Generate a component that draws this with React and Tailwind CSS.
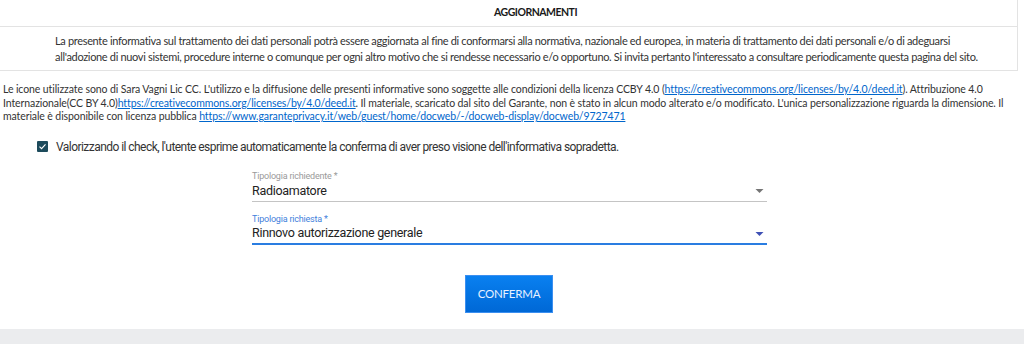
import React from "react";

const titi = { fontFamily: "Lato, 'Liberation Sans', sans-serif" };

function Select({ label, value, active }) {
  return (
    <div className="w-[515px] mr-[5px]">
      <div className={`text-[9px] leading-[11px] tracking-[-0.2px] ${active ? "text-[#3f7fdc]" : "text-[#9a9a9a]"}`}>{label}</div>
      <div
        className={`flex items-center justify-between h-[20px] text-[12.5px] tracking-[-0.3px] text-[#222] ${
          active ? "border-b-2 border-[#2a7de1]" : "border-b border-[#c4c4c4]"
        }`}
      >
        <span>{value}</span>
        <svg width="9" height="4" viewBox="0 0 10 5" className="mr-[3px]">
          <path d="M0 0 L10 0 L5 5 Z" fill={active ? "#3f51b5" : "#757575"} />
        </svg>
      </div>
    </div>
  );
}

export default function App() {
  return (
    <div className="w-[1024px] h-[344px] bg-white flex flex-col text-[#333]" style={titi}>
      <div className="w-[1018px] border-r border-[#e3e3e3]">
        <div className="h-[27px] pl-[54px] flex items-center justify-center border-b border-[#e3e3e3] text-[10.5px] tracking-[-0.5px] font-bold text-[#1a1a1a]">
          AGGIORNAMENTI
        </div>
        <div className="h-[44px] pl-[55px] pt-[6px] text-[11px] tracking-[-0.33px] leading-[16px] whitespace-nowrap border-b border-[#e3e3e3]">
          La presente informativa sul trattamento dei dati personali potrà essere aggiornata al fine di conformarsi alla normativa, nazionale ed europea, in materia di trattamento dei dati personali e/o di adeguarsi
          <br />
          all'adozione di nuovi sistemi, procedure interne o comunque per ogni altro motivo che si rendesse necessario e/o opportuno. Si invita pertanto l'interessato a consultare periodicamente questa pagina del sito.
        </div>
      </div>

      <div className="pl-[3px] pt-[12px] text-[10.5px] tracking-[-0.1px] leading-[13.5px] whitespace-nowrap">
        Le icone utilizzate sono di Sara Vagni Lic CC. L'utilizzo e la diffusione delle presenti informative sono soggette alle condizioni della licenza CCBY 4.0 (
        <a className="text-[#0066cc] underline">https://creativecommons.org/licenses/by/4.0/deed.it</a>). Attribuzione 4.0
        <br />
        Internazionale(CC BY 4.0)
        <a className="text-[#0066cc] underline">https://creativecommons.org/licenses/by/4.0/deed.it</a>. Il materiale, scaricato dal sito del Garante, non è stato in alcun modo alterato e/o modificato. L'unica personalizzazione riguarda la dimensione. Il
        <br />
        materiale è disponibile con licenza pubblica{" "}
        <a className="text-[#0066cc] underline">https://www.garanteprivacy.it/web/guest/home/docweb/-/docweb-display/docweb/9727471</a>
      </div>

      <div className="flex items-center pl-[37px] pt-[14px] gap-[8px] text-[12px] tracking-[-0.55px] text-[#333]" style={{ fontFamily: "Roboto, sans-serif" }}>
        <span className="w-[11px] h-[11px] rounded-[1px] bg-[#1d4b5c] flex items-center justify-center">
          <svg width="9" height="9" viewBox="0 0 24 24">
            <path d="M4 12.5 L9.5 18 L20 6.5" fill="none" stroke="white" strokeWidth="3" />
          </svg>
        </span>
        <span>Valorizzando il check, l'utente esprime automaticamente la conferma di aver preso visione dell'informativa sopradetta.</span>
      </div>

      <div className="flex flex-col items-center pt-[15px] gap-[12px]" style={{ fontFamily: "Roboto, sans-serif" }}>
        <Select label="Tipologia richiedente *" value="Radioamatore" />
        <Select label="Tipologia richiesta *" value="Rinnovo autorizzazione generale" active />
      </div>

      <div className="flex pl-[465px] pt-[30px]">
        <button className="w-[88px] h-[38px] bg-gradient-to-b from-[#0a80f0] to-[#0068d6] border border-[#3b8ff0] text-[11.5px] text-[#e8f1ff] tracking-[-0.2px]">
          CONFERMA
        </button>
      </div>
      <div className="mt-auto h-[15px] bg-[#ebecee]"></div>
    </div>
  );
}
